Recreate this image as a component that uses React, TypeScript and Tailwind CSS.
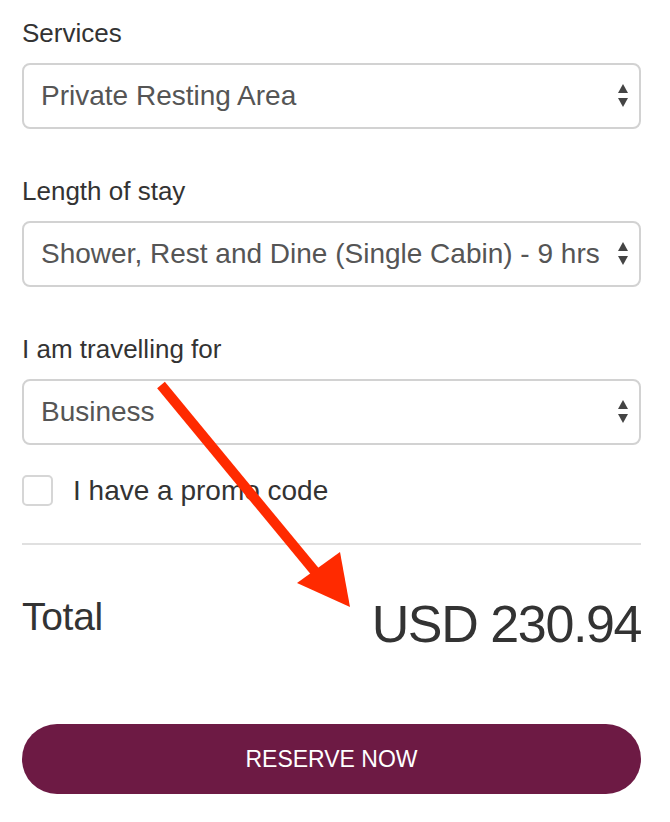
import React from "react"

const font = { fontFamily: '"Liberation Sans", Arial, sans-serif' }

function Arrows() {
  return (
    <svg width="10" height="26" viewBox="0 0 10 26" className="shrink-0">
      <polygon points="5,1 10,10 0,10" fill="#444" />
      <polygon points="0,15 10,15 5,24" fill="#444" />
    </svg>
  )
}

function SelectBox({ value }: { value: string }) {
  return (
    <div className="mt-[15px] h-[66px] w-full rounded-[8px] border-2 border-[#d2d2d2] bg-white flex items-center justify-between pl-[17px] pr-[11px]">
      <span className="text-[28px] text-[#555] whitespace-nowrap">{value}</span>
      <Arrows />
    </div>
  )
}

function Label({ children, first }: { children: React.ReactNode; first?: boolean }) {
  return (
    <div className={(first ? "" : "mt-[47px] ") + "h-[30px] leading-[30px] text-[26px] text-[#333]"}>
      {children}
    </div>
  )
}

export default function App() {
  return (
    <div className="relative w-[670px] h-[822px] bg-white overflow-hidden" style={font}>
      <div className="pl-[22px] pt-[18px] w-[641px]">
        <Label first>Services</Label>
        <SelectBox value="Private Resting Area" />

        <Label>Length of stay</Label>
        <SelectBox value="Shower, Rest and Dine (Single Cabin) - 9 hrs" />

        <Label>I am travelling for</Label>
        <SelectBox value="Business" />

        <div className="mt-[30px] h-[31px] flex items-center gap-[20px]">
          <div className="w-[31px] h-[31px] rounded-[5px] border-2 border-[#d6d6d6] bg-white" />
          <span className="text-[28px] leading-none text-[#333]">I have a promo code</span>
        </div>

        <div className="mt-[37px] border-t-2 border-[#e0e0e0]" />

        <div className="mt-[52px] flex items-start justify-between leading-none text-[#333]">
          <span className="text-[39px] tracking-[-0.3px]">Total</span>
          <span className="mt-[1px] text-[52px] tracking-[-1.4px]">USD 230.94</span>
        </div>

        <button className="mt-[74px] w-full h-[70px] rounded-full bg-[#6d1a44] text-white text-[23px] flex items-center justify-center">
          RESERVE NOW
        </button>
      </div>

      {/* annotation arrow */}
      <svg className="absolute left-0 top-0 pointer-events-none" width="670" height="822">
        <line x1="161" y1="385" x2="322" y2="580" stroke="#ff2a00" strokeWidth="10" />
        <polygon points="350,607 297,583 340,552" fill="#ff2a00" />
      </svg>
    </div>
  )
}
